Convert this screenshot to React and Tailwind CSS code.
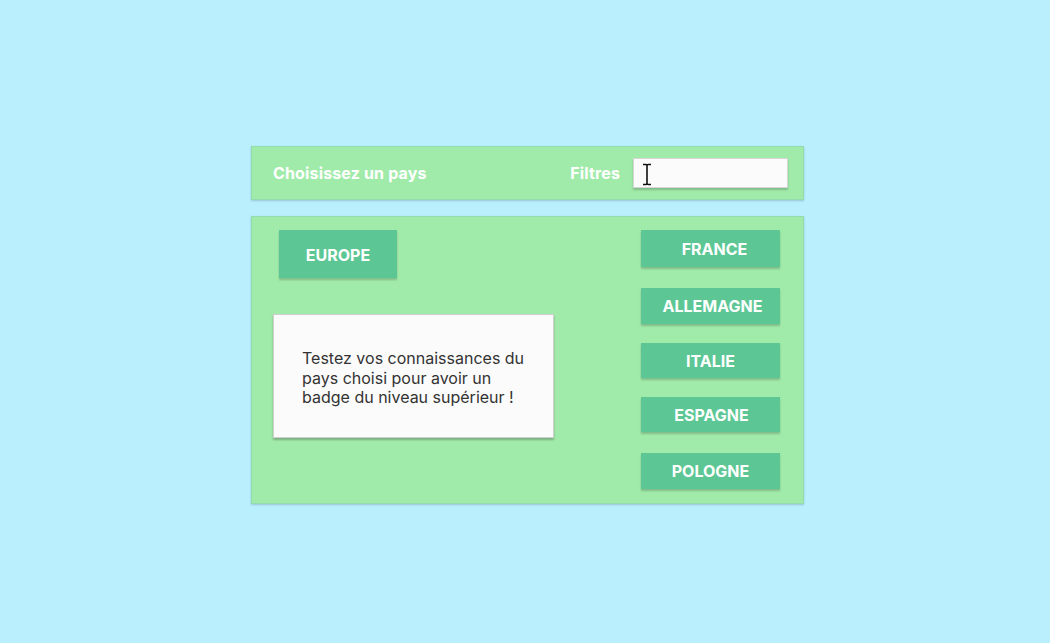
export default function App() {
  const pays = [
    { nom: 'FRANCE', cls: 'h-[37px] mb-[21px] pl-[8px]' },
    { nom: 'ALLEMAGNE', cls: 'h-[36px] mb-[19px] pl-[4px]' },
    { nom: 'ITALIE', cls: 'h-[35px] mb-[19px]' },
    { nom: 'ESPAGNE', cls: 'h-[35px] mb-[21px] pl-[2px]' },
    { nom: 'POLOGNE', cls: 'h-[36px]' },
  ]

  return (
    <div className="min-h-screen w-full bg-[#baeffe] pt-[146px] font-['Inter','Noto_Sans',sans-serif]">
      <div className="ml-[251px] w-[553px]">
        {/* Barre du haut */}
        <div className="h-[54px] bg-[#a1ebaa] border border-[#92dcae] shadow-[0_1px_2px_rgba(0,0,0,0.18)] flex items-center pl-[21px] pr-[15px]">
          <span className="text-white font-bold text-[16px] tracking-[0.15px] flex-1">Choisissez un pays</span>
          <span className="text-white font-bold text-[16px] tracking-[0.15px] mr-[13px]">Filtres</span>
          <div className="relative w-[155px] h-[30px] bg-[#fbfbfb] border border-[#d6d6d6] shadow-[0_2px_2px_rgba(0,0,0,0.2)]">
            <svg className="absolute left-[7px] top-[4px]" width="12" height="23" viewBox="0 0 12 23" fill="none" stroke="#111" strokeWidth="1.6">
              <path d="M2 1.5 H5 M7 1.5 H10 M5 1.5 Q6 1.5 6 3 V20 Q6 21.5 5 21.5 H2 M7 1.5 Q6 1.5 6 3 M6 20 Q6 21.5 7 21.5 H10" />
            </svg>
          </div>
        </div>

        {/* Panneau principal */}
        <div className="mt-[16px] h-[288px] bg-[#a1ebaa] border border-[#92dcae] shadow-[0_1px_2px_rgba(0,0,0,0.18)] flex justify-between pl-[21px] pr-[23px] pt-[13px]">
          <div className="flex flex-col">
            <button className="ml-[6px] w-[118px] h-[48px] bg-[#5cc794] text-white font-bold text-[16px] pt-[2px] shadow-[0_2px_2px_rgba(0,0,0,0.2)]">
              EUROPE
            </button>
            <div className="mt-[36px] w-[281px] h-[124px] bg-[#fbfbfb] border border-[#cfcfcf] shadow-[0_2px_2px_rgba(0,0,0,0.25)] pl-[28px] pt-[34px] pr-[20px]">
              <p className="text-[#333] text-[16px] leading-[19.5px]">
                Testez vos connaissances du pays choisi pour avoir un badge du niveau supérieur !
              </p>
            </div>
          </div>
          <div className="flex flex-col">
            {pays.map((p) => (
              <button
                key={p.nom}
                className={`w-[139px] bg-[#5cc794] text-white font-bold text-[16px] shadow-[0_2px_2px_rgba(0,0,0,0.2)] ${p.cls}`}
              >
                {p.nom}
              </button>
            ))}
          </div>
        </div>
      </div>
    </div>
  )
}
